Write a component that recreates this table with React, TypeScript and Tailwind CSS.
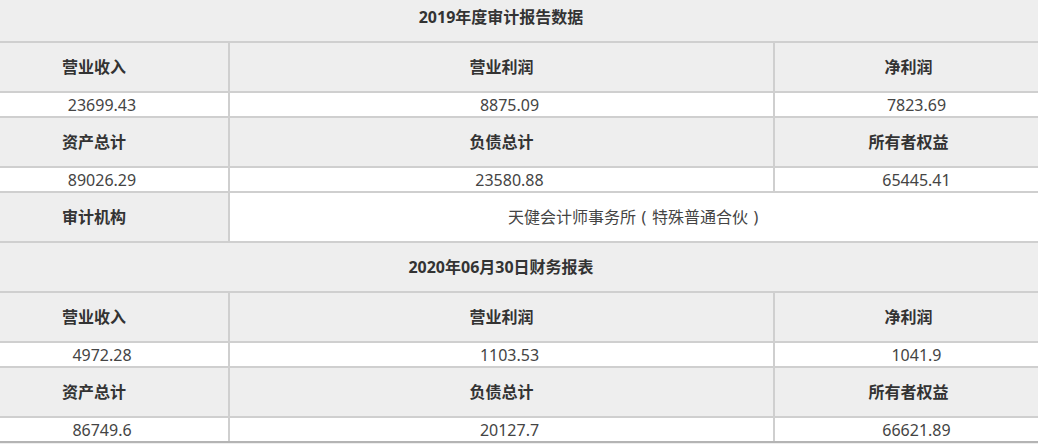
import React from "react";

const font = "font-['Noto_Sans','Noto_Sans_CJK_SC',sans-serif]";

function TitleRow({ text }: { text: string }) {
  return (
    <div className="flex h-[50px] items-center justify-center border-b-2 border-[#cfcfcf] bg-[#eeeeee] text-[16px] font-bold text-[#333]">
      {text}
    </div>
  );
}

function HeaderRow({ cells }: { cells: string[] }) {
  return (
    <div className="flex h-[50px] border-b-2 border-[#cfcfcf] bg-[#eeeeee] text-[16px] font-bold text-[#333]">
      <div className="flex w-[270px] items-center justify-center border-r-2 border-[#cfcfcf]">{cells[0]}</div>
      <div className="flex w-[545px] items-center justify-center border-r-2 border-[#cfcfcf]">{cells[1]}</div>
      <div className="flex flex-1 items-center justify-center">{cells[2]}</div>
    </div>
  );
}

function ValueRow({ cells, last }: { cells: string[]; last?: boolean }) {
  return (
    <div
      className={
        "flex h-[25px] border-b-2 bg-white text-[16px] text-[#444] " +
        (last ? "border-[#b4b4b4]" : "border-[#cfcfcf]")
      }
    >
      <div className="flex w-[270px] items-center justify-center border-r-2 border-[#cfcfcf] pl-[16px]">{cells[0]}</div>
      <div className="flex w-[545px] items-center justify-center border-r-2 border-[#cfcfcf] pl-[16px]">{cells[1]}</div>
      <div className="flex flex-1 items-center justify-center pl-[16px]">{cells[2]}</div>
    </div>
  );
}

export default function App() {
  return (
    <div className={`h-[444px] w-[1038px] overflow-hidden bg-[#eeeeee] ${font}`}>
      <div className="-ml-[40px] -mt-[7px] w-[1082px]">
        <TitleRow text="2019年度审计报告数据" />
        <HeaderRow cells={["营业收入", "营业利润", "净利润"]} />
        <ValueRow cells={["23699.43", "8875.09", "7823.69"]} />
        <HeaderRow cells={["资产总计", "负债总计", "所有者权益"]} />
        <ValueRow cells={["89026.29", "23580.88", "65445.41"]} />
        <div className="flex h-[50px] border-b-2 border-[#cfcfcf] text-[16px] text-[#333]">
          <div className="flex w-[270px] items-center justify-center border-r-2 border-[#cfcfcf] bg-[#eeeeee] font-bold">
            审计机构
          </div>
          <div className="flex flex-1 items-center justify-center bg-white text-[#444]">
            <span>
              天健会计师事务所<span className="inline-block w-[16px] text-center">(</span>特殊普通合伙<span className="inline-block w-[16px] text-center">)</span>
            </span>
          </div>
        </div>
        <TitleRow text="2020年06月30日财务报表" />
        <HeaderRow cells={["营业收入", "营业利润", "净利润"]} />
        <ValueRow cells={["4972.28", "1103.53", "1041.9"]} />
        <HeaderRow cells={["资产总计", "负债总计", "所有者权益"]} />
        <ValueRow cells={["86749.6", "20127.7", "66621.89"]} last />
      </div>
    </div>
  );
}
